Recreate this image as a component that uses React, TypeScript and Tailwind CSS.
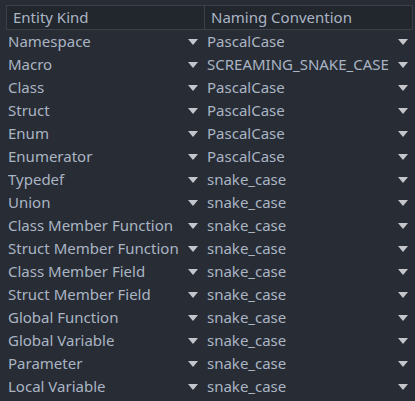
import React from 'react';

type Row = { kind: string; convention: string };

const rows: Row[] = [
  { kind: 'Namespace', convention: 'PascalCase' },
  { kind: 'Macro', convention: 'SCREAMING_SNAKE_CASE' },
  { kind: 'Class', convention: 'PascalCase' },
  { kind: 'Struct', convention: 'PascalCase' },
  { kind: 'Enum', convention: 'PascalCase' },
  { kind: 'Enumerator', convention: 'PascalCase' },
  { kind: 'Typedef', convention: 'snake_case' },
  { kind: 'Union', convention: 'snake_case' },
  { kind: 'Class Member Function', convention: 'snake_case' },
  { kind: 'Struct Member Function', convention: 'snake_case' },
  { kind: 'Class Member Field', convention: 'snake_case' },
  { kind: 'Struct Member Field', convention: 'snake_case' },
  { kind: 'Global Function', convention: 'snake_case' },
  { kind: 'Global Variable', convention: 'snake_case' },
  { kind: 'Parameter', convention: 'snake_case' },
  { kind: 'Local Variable', convention: 'snake_case' },
];

function Caret() {
  return (
    <svg width="10" height="6" viewBox="0 0 10 6" className="shrink-0" aria-hidden="true">
      <path d="M0 0 H10 L5 6 Z" fill="#c4c6cb" />
    </svg>
  );
}

function Cell({ text, className }: { text: string; className: string }) {
  return (
    <div className={`flex h-[23px] items-center justify-between ${className}`}>
      <span className="whitespace-nowrap">{text}</span>
      <Caret />
    </div>
  );
}

export default function App() {
  return (
    <div
      className="h-[401px] w-[415px] overflow-hidden bg-[#282c34] text-[15px] leading-none text-[#aab5c4]"
      style={{ fontFamily: '"Noto Sans", "Open Sans", sans-serif' }}
    >
      <div className="pl-[6px] pr-[2px] pt-[5px]">
        <div className="flex h-[25px] border border-[#3a3f48] bg-[#22262d]">
          <div className="flex w-[198px] items-center border-r border-[#3a3f48] pl-[6px]">Entity Kind</div>
          <div className="flex flex-1 items-center pl-[6px]">Naming Convention</div>
        </div>
      </div>
      <div>
        {rows.map((row) => (
          <div key={row.kind} className="flex">
            <Cell text={row.kind} className="w-[204px] pl-[8px] pr-[6px]" />
            <Cell text={row.convention} className="flex-1 pl-[3px] pr-[7px]" />
          </div>
        ))}
      </div>
    </div>
  );
}
